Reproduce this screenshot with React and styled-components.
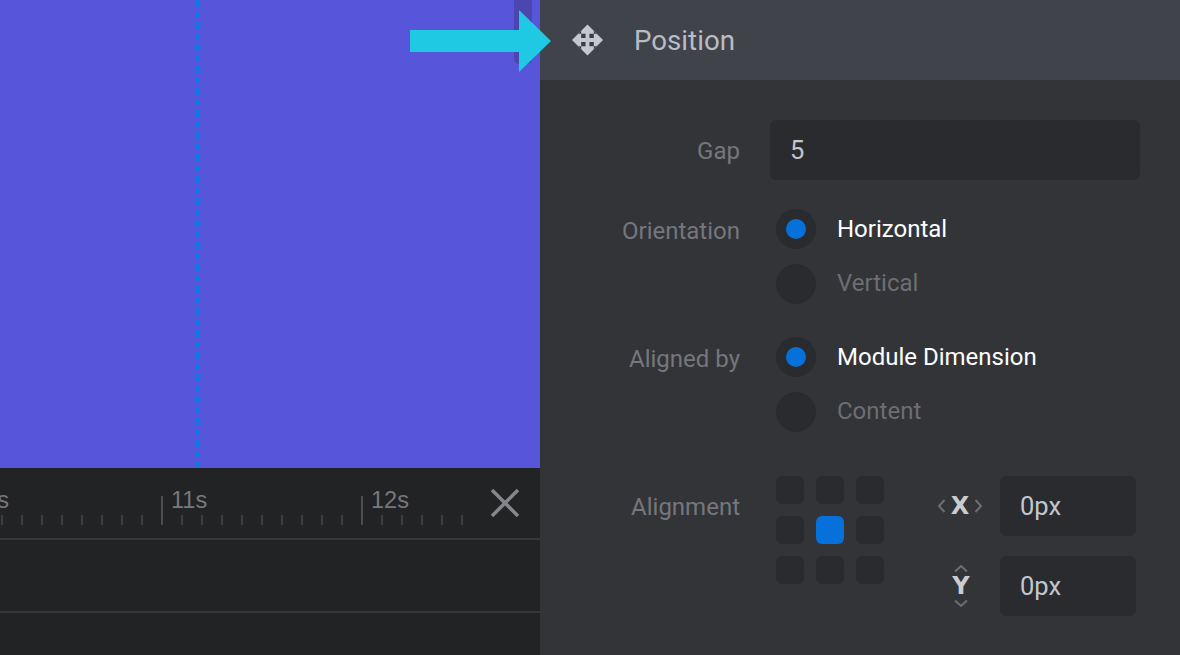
import * as React from 'react';
import styled, { createGlobalStyle } from 'styled-components';

const GlobalStyle = createGlobalStyle`
  html, body {
    margin: 0;
    padding: 0;
    background: #333438;
  }
  body {
    font-family: Roboto, "Liberation Sans", sans-serif;
    overflow: hidden;
  }
`;

const Page = styled.div`
  position: relative;
  display: flex;
  width: 1180px;
  height: 655px;
  overflow: hidden;
`;

const Stage = styled.div`
  display: flex;
  flex-direction: column;
  width: 540px;
`;

const Canvas = styled.div`
  position: relative;
  height: 468px;
  background: #5755d9;
`;

const Guide = styled.div`
  position: absolute;
  top: 0;
  bottom: 0;
  left: 196px;
  width: 3px;
  background: repeating-linear-gradient(to bottom, #0d78e6 0 7px, transparent 7px 11px);
`;

const Handle = styled.div`
  position: absolute;
  top: 0;
  left: 514px;
  width: 18px;
  height: 64px;
  border-radius: 0 0 5px 5px;
  background: #4b47ae;
`;

const Timeline = styled.div`
  flex: 1;
  background: #222325;
`;

const RulerRow = styled.div`
  position: relative;
  display: flex;
  align-items: flex-end;
  height: 57px;
  padding-bottom: 13px;
  border-bottom: 2px solid #37383a;
`;

const Ticks = styled.div`
  display: flex;
  align-items: flex-end;
  margin-left: -38px;
`;

const Tick = styled.div`
  position: relative;
  flex: none;
  width: 20px;
  height: ${(p) => (p.$major ? 29 : 10)}px;

  &::before {
    content: '';
    position: absolute;
    left: -1px;
    bottom: 0;
    width: 2px;
    height: 100%;
    background: ${(p) => (p.$major ? '#4c4d4f' : '#3d3e40')};
  }
`;

const TickLabel = styled.span`
  position: absolute;
  left: 9px;
  top: -9px;
  font-family: "Liberation Sans", Arial, sans-serif;
  font-size: 23.5px;
  line-height: 27px;
  color: #77787c;
`;

const CloseIcon = styled.svg`
  position: absolute;
  left: 490px;
  top: 20px;
`;

const Track = styled.div`
  height: 71px;
  border-bottom: 2px solid #37383a;
`;

const Panel = styled.div`
  display: flex;
  flex-direction: column;
  width: 640px;
  background: #333438;
`;

const PanelHeader = styled.div`
  display: flex;
  align-items: center;
  gap: 31px;
  height: 80px;
  padding-left: 32px;
  background: #40444a;
  font-size: 27.7px;
  color: #b8bcc4;
`;

const Form = styled.div`
  display: flex;
  flex-direction: column;
  padding: 40px 40px 0 0;
`;

const Row = styled.div`
  display: grid;
  grid-template-columns: 200px 1fr;
  column-gap: 30px;
  margin-top: ${(p) => p.$top || 0}px;
`;

const Label = styled.div`
  padding-top: ${(p) => p.$pad || 0}px;
  text-align: right;
  font-size: 24px;
  line-height: 27px;
  color: #75777c;
`;

const Field = styled.div`
  display: flex;
  align-items: center;
  box-sizing: border-box;
  width: ${(p) => p.$width || '100%'};
  height: 60px;
  padding-left: 20px;
  border-radius: 6px;
  background: #2a2b2e;
  font-size: 25.5px;
  color: #c2c6cd;
`;

const RadioGroup = styled.div`
  display: flex;
  flex-direction: column;
  gap: 15px;
  padding-left: 6px;
`;

const RadioRow = styled.div`
  display: flex;
  gap: 21px;
  height: 40px;
  font-size: 24px;
  line-height: ${(p) => (p.$on ? 40 : 38)}px;
  color: ${(p) => (p.$on ? '#ffffff' : '#6c6e73')};
`;

const RadioDot = styled.div`
  display: flex;
  align-items: center;
  justify-content: center;
  width: 40px;
  height: 40px;
  border-radius: 50%;
  background: #2a2b2e;

  &::after {
    content: '';
    width: 20px;
    height: 20px;
    border-radius: 50%;
    background: ${(p) => (p.$on ? '#0670db' : 'transparent')};
  }
`;

const AlignRow = styled.div`
  display: flex;
  padding-left: 6px;
`;

const AlignGrid = styled.div`
  display: grid;
  grid-template-columns: repeat(3, 28px);
  grid-auto-rows: 28px;
  gap: 12px;
  align-self: flex-start;
`;

const AlignCell = styled.div`
  border-radius: 6px;
  background: ${(p) => (p.$on ? '#0670db' : '#2a2b2e')};
`;

const Offsets = styled.div`
  display: flex;
  flex-direction: column;
  gap: 20px;
  margin-left: 46px;
`;

const OffsetRow = styled.div`
  display: flex;
  align-items: center;
`;

const AxisSlot = styled.div`
  display: flex;
  flex-direction: ${(p) => (p.$column ? 'column' : 'row')};
  align-items: center;
  justify-content: center;
  gap: ${(p) => (p.$column ? 4 : 5)}px;
  box-sizing: border-box;
  width: 60px;
  margin-right: 10px;
  padding-left: ${(p) => (p.$column ? 2 : 0)}px;
  font-family: "DejaVu Sans", sans-serif;
  font-size: 24px;
  line-height: 18px;
  font-weight: 700;
  color: #c9ccd1;
`;

const Chevron = styled.svg`
  flex: none;
  display: block;
`;

const ArrowMark = styled.svg`
  position: absolute;
  left: 410px;
  top: 10px;
`;

// diamond with the four arrows cut apart at the diagonals
const MoveIcon = () => (
  <svg width="31" height="32" viewBox="0 0 32 32">
    <polygon points="16,0 32,16 16,32 0,16" fill="#c4c7cc" />
    <g fill="#3a3d42">
      <polygon points="6.5,9.5 9.5,6.5 9.5,9.5 14,9.5 14,14 9.5,14 9.5,9.5" />
      <polygon points="25.5,9.5 22.5,6.5 22.5,9.5 18,9.5 18,14 22.5,14 22.5,9.5" />
      <polygon points="6.5,22.5 9.5,25.5 9.5,22.5 14,22.5 14,18 9.5,18 9.5,22.5" />
      <polygon points="25.5,22.5 22.5,25.5 22.5,22.5 18,22.5 18,18 22.5,18 22.5,22.5" />
    </g>
  </svg>
);

const ticks = Array.from({ length: 26 }, (_, i) => i);
const labelFor = { 0: '10s', 10: '11s', 20: '12s' };
const cells = Array.from({ length: 9 }, (_, i) => i);

export default function App() {
  return (
    <Page>
      <GlobalStyle />
      <Stage>
        <Canvas>
          <Handle />
          <Guide />
        </Canvas>
        <Timeline>
          <RulerRow>
            <Ticks>
              {ticks.map((i) => (
                <Tick key={i} $major={i % 10 === 0}>
                  {labelFor[i] && <TickLabel>{labelFor[i]}</TickLabel>}
                </Tick>
              ))}
            </Ticks>
            <CloseIcon width="30" height="30" viewBox="0 0 30 30">
              <path d="M2 2 L28 28 M28 2 L2 28" stroke="#85878c" strokeWidth="3.5" fill="none" />
            </CloseIcon>
          </RulerRow>
          <Track />
        </Timeline>
      </Stage>
      <Panel>
        <PanelHeader>
          <MoveIcon />
          Position
        </PanelHeader>
        <Form>
          <Row>
            <Label $pad={18}>Gap</Label>
            <Field>5</Field>
          </Row>
          <Row $top={29}>
            <Label $pad={9}>Orientation</Label>
            <RadioGroup>
              <RadioRow $on>
                <RadioDot $on />
                Horizontal
              </RadioRow>
              <RadioRow>
                <RadioDot />
                Vertical
              </RadioRow>
            </RadioGroup>
          </Row>
          <Row $top={33}>
            <Label $pad={9}>Aligned by</Label>
            <RadioGroup>
              <RadioRow $on>
                <RadioDot $on />
                Module Dimension
              </RadioRow>
              <RadioRow>
                <RadioDot />
                Content
              </RadioRow>
            </RadioGroup>
          </Row>
          <Row $top={44}>
            <Label $pad={18}>Alignment</Label>
            <AlignRow>
              <AlignGrid>
                {cells.map((i) => (
                  <AlignCell key={i} $on={i === 4} />
                ))}
              </AlignGrid>
              <Offsets>
                <OffsetRow>
                  <AxisSlot>
                    <Chevron width="9" height="16" viewBox="0 0 9 16">
                      <path d="M7.5 2 L2 8 L7.5 14" stroke="#6c6e73" strokeWidth="2" fill="none" />
                    </Chevron>
                    X
                    <Chevron width="9" height="16" viewBox="0 0 9 16">
                      <path d="M1.5 2 L7 8 L1.5 14" stroke="#6c6e73" strokeWidth="2" fill="none" />
                    </Chevron>
                  </AxisSlot>
                  <Field $width="136px">0px</Field>
                </OffsetRow>
                <OffsetRow>
                  <AxisSlot $column>
                    <Chevron width="16" height="9" viewBox="0 0 16 9">
                      <path d="M2 7.5 L8 2 L14 7.5" stroke="#6c6e73" strokeWidth="2" fill="none" />
                    </Chevron>
                    Y
                    <Chevron width="16" height="9" viewBox="0 0 16 9">
                      <path d="M2 1.5 L8 7 L14 1.5" stroke="#6c6e73" strokeWidth="2" fill="none" />
                    </Chevron>
                  </AxisSlot>
                  <Field $width="136px">0px</Field>
                </OffsetRow>
              </Offsets>
            </AlignRow>
          </Row>
        </Form>
      </Panel>
      <ArrowMark width="141" height="62" viewBox="0 0 141 62">
        <polygon points="0,20 109,20 109,0 141,31 109,62 109,42 0,42" fill="#1fc8e3" />
      </ArrowMark>
    </Page>
  );
}
